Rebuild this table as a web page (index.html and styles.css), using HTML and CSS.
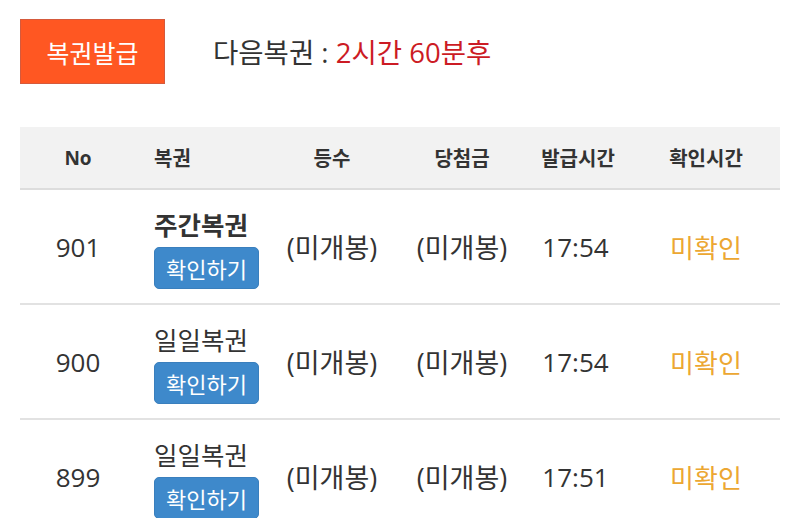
FILE: index.html
```html
<!DOCTYPE html>
<html lang="ko">
<head>
<meta charset="utf-8">
<link rel="stylesheet" href="styles.css">
</head>
<body>
<div class="page">
  <div class="top">
    <button class="issue-btn">복권발급</button>
    <div class="next">다음복권 : <span class="remain">2시간 60분후</span></div>
  </div>
  <div class="list">
    <div class="row head">
      <div class="c c1 latin">No</div>
      <div class="c c2">복권</div>
      <div class="c c3">등수</div>
      <div class="c c4">당첨금</div>
      <div class="c c5">발급시간</div>
      <div class="c c6">확인시간</div>
    </div>
    <div class="row">
      <div class="c c1 num">901</div>
      <div class="c c2"><div class="name bold">주간복권</div><button class="check-btn">확인하기</button></div>
      <div class="c c3 ko">(미개봉)</div>
      <div class="c c4 ko">(미개봉)</div>
      <div class="c c5 num">17:54</div>
      <div class="c c6 status">미확인</div>
    </div>
    <div class="row">
      <div class="c c1 num">900</div>
      <div class="c c2"><div class="name">일일복권</div><button class="check-btn">확인하기</button></div>
      <div class="c c3 ko">(미개봉)</div>
      <div class="c c4 ko">(미개봉)</div>
      <div class="c c5 num">17:54</div>
      <div class="c c6 status">미확인</div>
    </div>
    <div class="row">
      <div class="c c1 num">899</div>
      <div class="c c2"><div class="name">일일복권</div><button class="check-btn">확인하기</button></div>
      <div class="c c3 ko">(미개봉)</div>
      <div class="c c4 ko">(미개봉)</div>
      <div class="c c5 num">17:51</div>
      <div class="c c6 status">미확인</div>
    </div>
  </div>
</div>
</body>
</html>
```
FILE: styles.css
```css
* { box-sizing: border-box; }
html, body { margin: 0; background: #fff; }
body {
  font-family: "Open Sans", "Noto Sans CJK KR", sans-serif;
  color: #333;
  overflow: hidden;
}
.page { padding: 19px 20px 0 20px; }
.top {
  display: flex;
  align-items: center;
  gap: 48px;
}
.issue-btn {
  width: 145px;
  height: 65px;
  background: #ff5722;
  border: 1px solid #d55a3c;
  color: #fff;
  font-family: inherit;
  font-size: 25px;
  padding: 0;
  margin: 0;
}
.next {
  font-size: 27.5px;
  color: #333;
  margin-top: -2px;
}
.remain { color: #cc1b24; }
.list {
  margin-top: 43px;
}
.row {
  display: grid;
  grid-template-columns: 116px 134px 130px 124px 108px 148px;
  height: 115px;
  border-bottom: 2px solid #e2e2e2;
  align-items: center;
}
.row.head {
  height: 63px;
  background: #f2f2f2;
  border-bottom: 2px solid #dddddd;
  font-size: 20px;
  font-weight: bold;
}
.row.head .latin { font-size: 19px; }
.c { text-align: center; }
.c2 { text-align: left; padding-left: 18px; }
.num { font-size: 26px; }
.ko { font-size: 27px; }
.row .c3 { padding-right: 6px; }
.row:not(.head) .c5 { padding-right: 5px; }
.name {
  font-size: 25.5px;
  line-height: 34px;
  margin-top: 3px;
}
.name.bold { font-weight: bold; }
.check-btn {
  display: block;
  height: 42px;
  width: 105px;
  margin-top: 5px;
  background: #3e89cb;
  border: 1px solid #3a7fbd;
  border-radius: 5px;
  color: #fff;
  font-family: inherit;
  font-size: 22px;
  padding: 0;
}
.status { color: #eca732; font-size: 26px; }
```
